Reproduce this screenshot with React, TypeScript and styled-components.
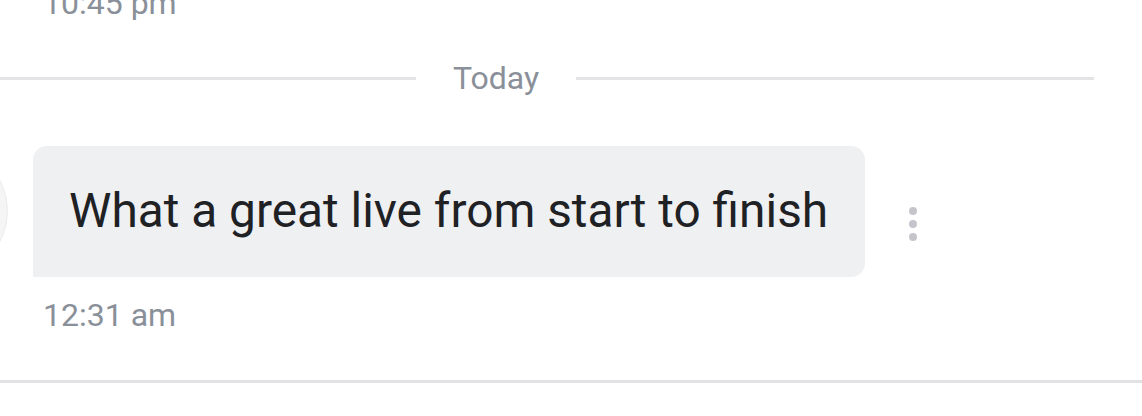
import styled, { createGlobalStyle } from 'styled-components';

const GlobalStyle = createGlobalStyle`
  html, body {
    margin: 0;
    padding: 0;
    background: #ffffff;
  }
  body {
    font-family: Roboto, 'Noto Sans', Arial, sans-serif;
  }
`;

const Screen = styled.div`
  width: 1142px;
  height: 416px;
  overflow: hidden;
  background: #ffffff;
  display: flex;
  flex-direction: column;
`;

const Timestamp = styled.div<{ $offset?: number }>`
  font-size: 32px;
  line-height: 38px;
  color: #8a9099;
  padding-left: 43px;
  margin-top: ${(p) => p.$offset ?? 0}px;
`;

const DayDivider = styled.div`
  display: flex;
  align-items: center;
  gap: 37px;
  margin-top: 37px;
  width: 1094px;
`;

const Rule = styled.div<{ $width?: number }>`
  height: 3px;
  background: #e4e4e6;
  flex: ${(p) => (p.$width ? `0 0 ${p.$width}px` : '1')};
`;

const DayLabel = styled.span`
  font-size: 32px;
  line-height: 38px;
  color: #8a9099;
`;

const MessageRow = styled.div`
  display: flex;
  align-items: center;
  margin-top: 48px;
`;

const Avatar = styled.div`
  flex: 0 0 132px;
  height: 132px;
  margin-left: -124px;
  margin-right: 25px;
  border-radius: 50%;
  background: #f5f5f6;
  border: 1px solid #ececee;
  box-sizing: border-box;
`;

const Bubble = styled.div`
  background: #eff0f2;
  border-radius: 14px 14px 14px 0;
  padding: 0 37px 0 36px;
  height: 131px;
  display: flex;
  align-items: center;
  font-size: 47.8px;
  color: #202124;
  white-space: nowrap;
`;

const MoreButton = styled.div`
  display: flex;
  flex-direction: column;
  gap: 5px;
  margin-left: 44px;
  margin-top: 25px;
`;

const Dot = styled.span`
  width: 8px;
  height: 8px;
  border-radius: 50%;
  background: #c4c4ca;
`;

const BottomRule = styled.div`
  height: 3px;
  background: #e2e2e4;
  margin-top: 46px;
`;

export default function App() {
  return (
    <Screen>
      <GlobalStyle />
      <Timestamp $offset={-16}>10:45 pm</Timestamp>
      <DayDivider>
        <Rule $width={416} />
        <DayLabel>Today</DayLabel>
        <Rule />
      </DayDivider>
      <MessageRow>
        <Avatar />
        <Bubble>What a great live from start to finish</Bubble>
        <MoreButton>
          <Dot />
          <Dot />
          <Dot />
        </MoreButton>
      </MessageRow>
      <Timestamp $offset={19}>12:31 am</Timestamp>
      <BottomRule />
    </Screen>
  );
}
